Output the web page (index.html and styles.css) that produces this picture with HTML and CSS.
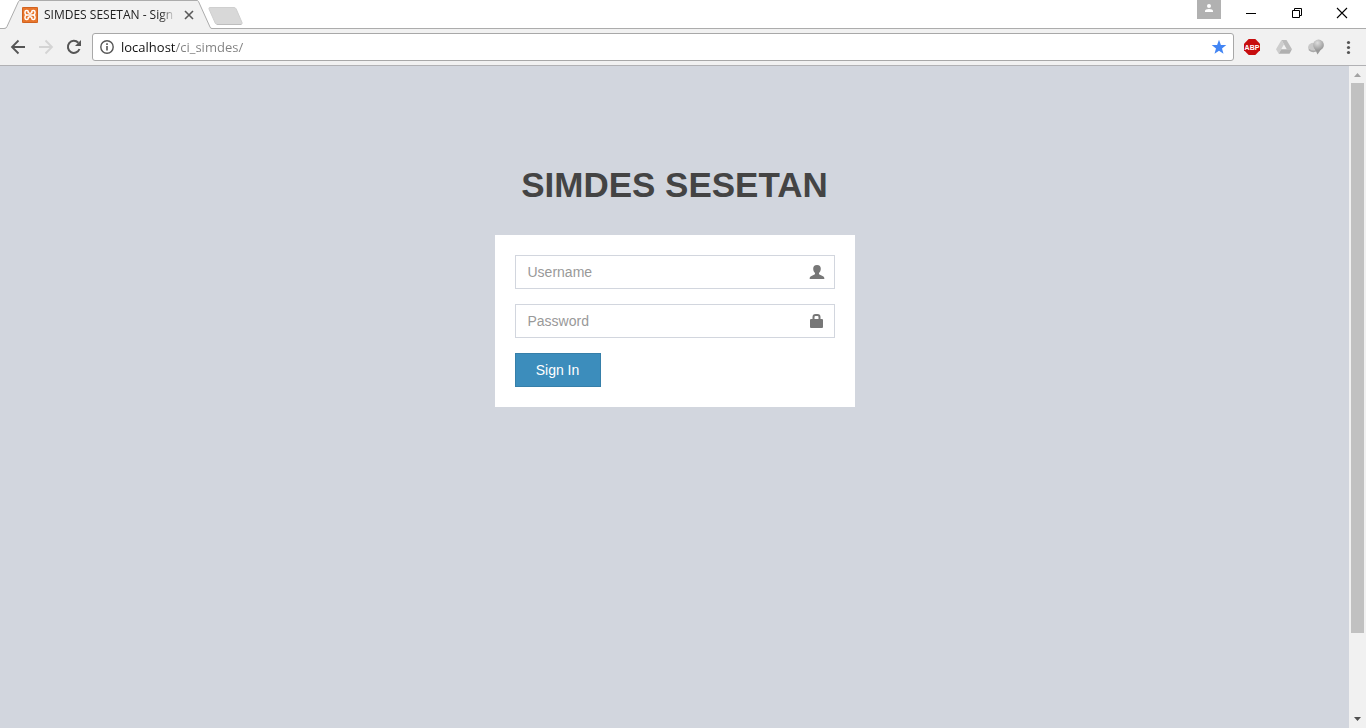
FILE: index.html
```html
<!DOCTYPE html>
<html lang="en">
<head>
<meta charset="utf-8">
<meta name="viewport" content="width=device-width, initial-scale=1">
<title>SIMDES SESETAN - Sign In</title>
<link rel="stylesheet" href="styles.css">
</head>
<body>
<div class="browser">
  <header class="titlebar">
    <div class="tab">
      <svg class="tab-shape" width="210" height="29" viewBox="0 0 210 29" aria-hidden="true">
        <path d="M0 28.500 Q2.500 28.500 3 26.500 L14.500 1.500 Q15 .5 16 .5 H193 Q194 .5 194.500 1.500 L206 27 Q206.500 28.500 208 28.500 H210 V29 H0Z" fill="#f1f1f1"/>
        <path d="M0 28.500 Q2.500 28.500 3 26.500 L14.500 1.500 Q15 .5 16 .5 H193 Q194 .5 194.500 1.500 L206 27 Q206.500 28.500 208 28.500 H210" fill="none" stroke="#acacac"/>
      </svg>
      <svg class="favicon" width="16" height="16" viewBox="0 0 16 16" aria-hidden="true">
        <rect width="16" height="16" rx="1" fill="#e8762c"/>
        <rect x=".5" y=".5" width="15" height="15" rx="1" fill="none" stroke="#cf6220"/>
        <path d="M6.200 6V4.500Q6.200 3.500 5 3.500H4.500Q3 3.500 3 5V6Q3 7.500 4.500 8Q3 8.500 3 10V11Q3 12.500 4.500 12.500H5Q6.200 12.500 6.200 11.500V10M9.800 6V4.500Q9.800 3.500 11 3.500H11.500Q13 3.500 13 5V6Q13 7.500 11.500 8Q13 8.500 13 10V11Q13 12.500 11.500 12.500H11Q9.800 12.500 9.800 11.500V10M4.500 8H11.500M6.200 5.500Q8 7 9.800 5.500M6.200 10.500Q8 9 9.800 10.500" fill="none" stroke="#fff" stroke-width="1.500"/>
      </svg>
      <span class="tab-title">SIMDES SESETAN - Sign In</span>
      <button class="tab-close" type="button" aria-label="Close tab">
        <svg width="10" height="10" viewBox="0 0 10 10"><path d="M1 1 9 9M9 1 1 9" stroke="#5a5a5a" stroke-width="1.600"/></svg>
      </button>
    </div>
    <button class="new-tab" type="button" aria-label="New tab">
      <svg width="36" height="19" viewBox="0 0 36 19"><path d="M2 .5 H26 Q27.500 .5 28.200 2 L34 15.500 Q34.500 17.500 33 17.500 H9.500 Q8 17.500 7.200 16 L1 2 Q.5 .5 2 .5Z" fill="#d8d8d8" stroke="#cfcfcf"/><path d="M9 17.500H33" stroke="#bdbdbd"/></svg>
    </button>
    <div class="window-controls">
      <button class="profile" type="button" aria-label="Profile">
        <svg width="24" height="19" viewBox="0 0 24 19"><circle cx="12" cy="6" r="2" fill="#fff"/><path d="M8 12V11Q8 9 12 9T16 11V12Z" fill="#fff"/></svg>
      </button>
      <button class="win" type="button" aria-label="Minimize"><svg width="12" height="12" viewBox="0 0 12 12"><path d="M1 6.500H11" stroke="#000"/></svg></button>
      <button class="win" type="button" aria-label="Restore"><svg width="12" height="12" viewBox="0 0 12 12"><path d="M1.500 3.500H8.500V10.500H1.500ZM3.500 3.500V1.500H10.500V8.500H8.500" fill="none" stroke="#000"/></svg></button>
      <button class="win" type="button" aria-label="Close"><svg width="12" height="12" viewBox="0 0 12 12"><path d="M1 1 11 11M11 1 1 11" stroke="#000" stroke-width="1.100"/></svg></button>
    </div>
  </header>

  <nav class="toolbar">
    <button class="tool" type="button" aria-label="Back"><svg width="16" height="16" viewBox="0 0 16 16"><path d="M15 8H2.500M8.500 1.500 2 8l6.500 6.500" fill="none" stroke="#555" stroke-width="1.800"/></svg></button>
    <button class="tool" type="button" aria-label="Forward" disabled><svg width="16" height="16" viewBox="0 0 16 16"><path d="M1 8H13.500M7.500 1.500 14 8l-6.500 6.500" fill="none" stroke="#d4d4d4" stroke-width="1.800"/></svg></button>
    <button class="tool" type="button" aria-label="Reload"><svg width="16" height="16" viewBox="0 0 16 16"><path d="M13.500 10A6 6 0 1 1 12.300 3.800" fill="none" stroke="#555" stroke-width="2"/><path d="M15 1V7H9Z" fill="#555"/></svg></button>
    <div class="address">
      <svg width="14" height="14" viewBox="0 0 14 14" aria-hidden="true"><circle cx="7" cy="7" r="6.200" fill="none" stroke="#555" stroke-width="1.400"/><path d="M7 6V10.500M7 3.300V5" stroke="#555" stroke-width="1.600"/></svg>
      <input class="url" type="text" value="localhost/ci_simdes/" aria-label="Address">
      <button class="star" type="button" aria-label="Bookmark"><svg width="16" height="16" viewBox="0 0 16 16"><path d="M8 .8 9.900 5.900 15.300 6.100 11 9.500 12.500 14.700 8 11.700 3.500 14.700 5 9.500 .7 6.100 6.100 5.900Z" fill="#4285f4"/></svg></button>
    </div>
    <div class="extensions">
      <button class="tool" type="button" aria-label="Adblock Plus"><svg width="16" height="16" viewBox="0 0 16 16"><path d="M4.700 0H11.300L16 4.700V11.300L11.300 16H4.700L0 11.300V4.700Z" fill="#c70d0e"/><text class="abp" x="8" y="11" text-anchor="middle">ABP</text></svg></button>
      <button class="tool" type="button" aria-label="Drive"><svg width="16" height="16" viewBox="0 0 16 16"><path d="M5.500 1H10.500L16 10.200H10.800L5.500 1Z" fill="#bcbcbc"/><path d="M5.500 1 8 5.300 2.700 14.800 0 10.200Z" fill="#cdcdcd"/><path d="M5.300 10.200H16L13.500 14.800H2.700Z" fill="#b0b0b0"/></svg></button>
      <button class="tool" type="button" aria-label="Globe"><svg width="16" height="16" viewBox="0 0 16 16"><defs><radialGradient id="ball" cx=".4" cy=".3" r=".7"><stop offset="0" stop-color="#dedede"/><stop offset="1" stop-color="#979797"/></radialGradient></defs><ellipse cx="5.500" cy="8.500" rx="5.500" ry="4.700" fill="#c9c9c9"/><path d="M1 10.500Q4.500 14 9 11" fill="none" stroke="#aaa" stroke-width="1.500"/><path d="M6.500 9 9.500 15.500 14 9Z" fill="#999"/><circle cx="10.500" cy="6" r="5.400" fill="url(#ball)"/></svg></button>
      <button class="tool" type="button" aria-label="Menu"><svg width="16" height="16" viewBox="0 0 16 16"><g fill="#555"><circle cx="8.500" cy="3.500" r="1.600"/><circle cx="8.500" cy="8.500" r="1.600"/><circle cx="8.500" cy="13.500" r="1.600"/></g></svg></button>
    </div>
  </nav>

  <div class="viewport">
    <main class="page">
      <div class="login-box">
        <h1 class="login-logo">SIMDES SESETAN</h1>
        <form class="login-form">
          <div class="field">
            <input class="form-control" type="text" placeholder="Username" aria-label="Username">
            <svg class="field-icon" width="16" height="16" viewBox="0 0 16 16" aria-hidden="true"><path d="M8 1C10.700 1 11.800 2.600 11.800 4.700 11.800 6.700 11 7.700 10.200 8.700 9.800 9.300 9.900 10.300 10.500 10.600L14 12.200Q15.300 12.800 15.300 14V15H.7V14Q.7 12.800 2 12.200L5.500 10.600C6.100 10.300 6.200 9.300 5.800 8.700 5 7.700 4.200 6.700 4.200 4.700 4.200 2.600 5.300 1 8 1Z" fill="#777"/></svg>
          </div>
          <div class="field">
            <input class="form-control" type="password" placeholder="Password" aria-label="Password">
            <svg class="field-icon" width="16" height="16" viewBox="0 0 16 16" aria-hidden="true"><path d="M4.500 7V4Q4.500 2 6.500 2H8.500Q10.500 2 10.500 4V7" fill="none" stroke="#777" stroke-width="2"/><rect x="1" y="6" width="13" height="9" rx="1" fill="#777"/></svg>
          </div>
          <button class="btn" type="submit">Sign In</button>
        </form>
      </div>
    </main>
    <div class="scrollbar" aria-hidden="true">
      <svg width="17" height="17" viewBox="0 0 17 17"><path d="M5 11 8.500 7 12 11Z" fill="#a3a3a3"/></svg>
      <div class="thumb"></div>
      <div class="track-rest"></div>
      <svg width="17" height="17" viewBox="0 0 17 17"><path d="M5 6 8.500 10 12 6Z" fill="#505050"/></svg>
    </div>
  </div>
</div>
</body>
</html>
```
FILE: styles.css
```css
* { box-sizing: border-box; }

body {
  margin: 0;
  font-family: "Liberation Sans", Arial, sans-serif;
  font-size: 14px;
  color: #333;
}

button {
  display: flex;
  align-items: center;
  justify-content: center;
  padding: 0;
  border: 0;
  background: none;
  font-family: inherit;
}

svg { display: block; flex: none; }

.browser {
  display: flex;
  flex-direction: column;
  min-height: 100vh;
}

/* Title bar */
.titlebar {
  display: flex;
  height: 29px;
  padding-left: 4px;
  background: linear-gradient(#acacac, #acacac) bottom / 100% 1px no-repeat #fff;
}

.tab {
  position: relative;
  display: flex;
  align-items: center;
  width: 210px;
  padding: 1px 20px 0 18px;
}

.tab-shape {
  position: absolute;
  top: 0;
  left: 0;
}

.favicon, .tab-title, .tab-close { position: relative; }

.tab-title {
  flex: 1;
  min-width: 0;
  margin: 0 8px 0 6px;
  overflow: hidden;
  white-space: nowrap;
  font-family: "Open Sans", "Noto Sans", sans-serif;
  font-size: 12px;
  line-height: 18px;
  color: #222;
  mask-image: linear-gradient(to left, transparent, #000 16px);
}

.tab-close { width: 10px; }

.new-tab { align-self: flex-start; padding-top: 7px; margin-left: -6px; }

.window-controls {
  display: flex;
  margin-left: auto;
  padding-right: 2px;
  height: 28px;
}

.profile {
  align-self: flex-start;
  margin-right: 7px;
  background: #b1b1b1;
}

.win { width: 45px; height: 26px; }

.win:nth-child(2) { width: 46px; }

/* Toolbar */
.toolbar {
  display: flex;
  align-items: center;
  height: 37px;
  padding: 0 10px;
  gap: 12px;
  background: #f1f1f1;
  border-bottom: 1px solid #b1b1b4;
}

.tool { width: 16px; height: 16px; }

.address {
  display: flex;
  flex: 1;
  align-items: center;
  height: 28px;
  margin-left: -2px;
  padding: 0 6px 0 7px;
  background: #fff;
  border: 1px solid #a8a8a8;
  border-radius: 3px;
}

/* The host part is darker than the path that follows it. */
.url {
  flex: 1;
  min-width: 0;
  padding: 0 0 0 7px;
  border: 0;
  font-family: "Open Sans", "Noto Sans", sans-serif;
  font-size: 13px;
  line-height: 20px;
  color: transparent;
  background: linear-gradient(to right, #111 62px, #808080 62px);
  background-clip: text;
}

.extensions {
  display: flex;
  gap: 16px;
  margin-left: -2px;
}

.abp {
  font-family: "Liberation Sans", Arial, sans-serif;
  font-size: 7px;
  font-weight: bold;
  fill: #fff;
}

/* Page */
.viewport {
  display: flex;
  flex: 1;
}

.page {
  flex: 1;
  background: #d2d6de;
}

.login-box {
  width: 360px;
  max-width: 100%;
  margin: 7% auto;
}

.login-logo {
  margin: 0 0 25px;
  font-size: 35px;
  line-height: 50px;
  text-align: center;
  color: #444;
}

.login-form {
  display: flex;
  flex-direction: column;
  align-items: flex-start;
  gap: 15px;
  padding: 20px;
  background: #fff;
}

.field { position: relative; width: 100%; }

.form-control {
  display: block;
  width: 100%;
  height: 34px;
  padding: 6px 42px 6px 12px;
  border: 1px solid #d2d6de;
  border-radius: 0;
  background: #fff;
  font-family: inherit;
  font-size: 14px;
  color: #555;
}

.form-control::placeholder { color: #999; opacity: 1; }

.field-icon {
  position: absolute;
  top: 9px;
  right: 10px;
}

.btn {
  width: 86px;
  height: 34px;
  border: 1px solid #367fa9;
  background: #3c8dbc;
  font-size: 14px;
  color: #fff;
}

/* Scrollbar */
.scrollbar {
  display: flex;
  flex-direction: column;
  width: 17px;
  background: #f1f1f1;
}

.thumb {
  flex: 550;
  margin: 0 2px;
  background: #c1c1c1;
}

.track-rest { flex: 78; }
```
